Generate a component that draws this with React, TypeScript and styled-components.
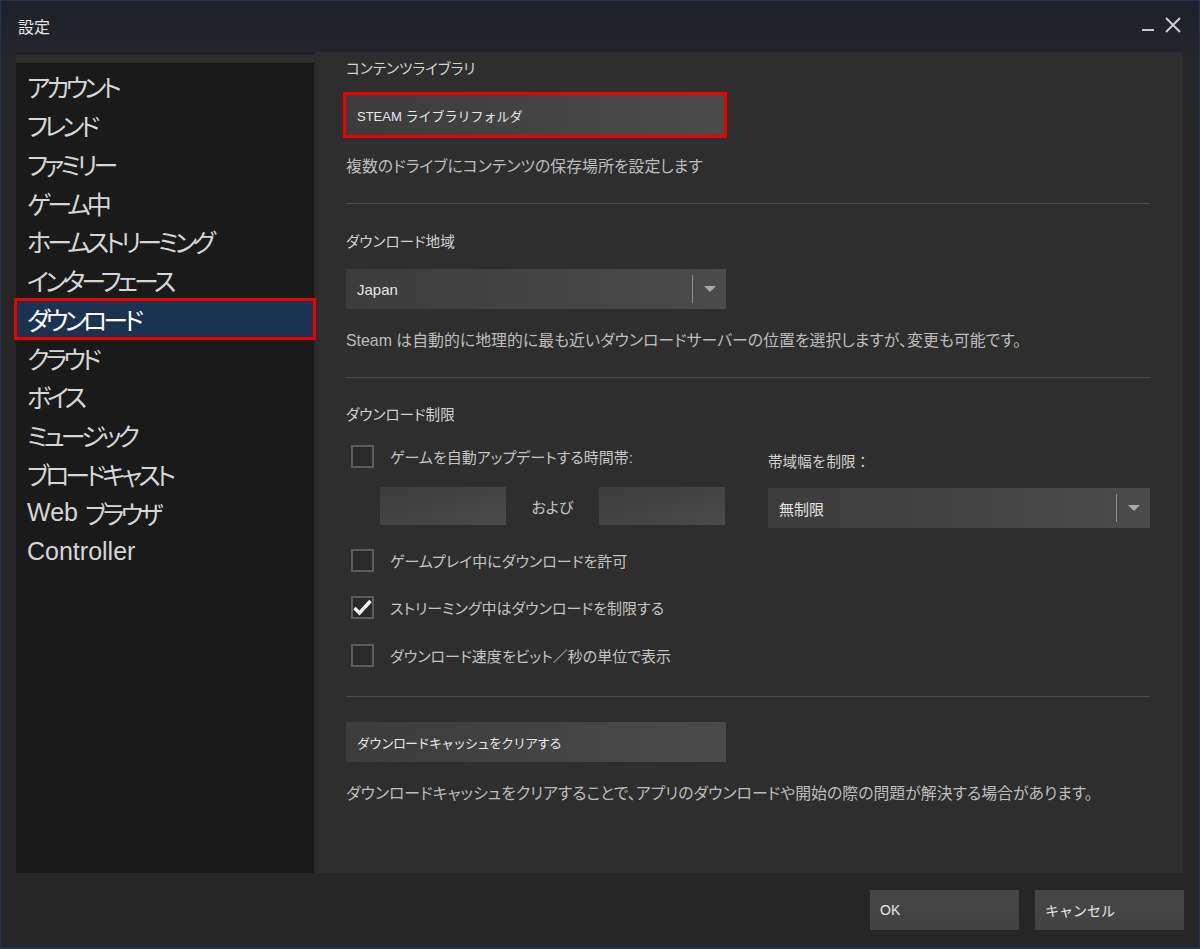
import React from "react";
import styled, { createGlobalStyle } from "styled-components";

const GlobalStyle = createGlobalStyle`
  html, body { margin: 0; padding: 0; background: #262626; }
  body {
    font-family: "Liberation Sans", "Noto Sans CJK JP", sans-serif;
    font-feature-settings: "palt";
    -webkit-font-smoothing: antialiased;
  }
  * { box-sizing: border-box; }
`;

const Window = styled.div`
  width: 1200px;
  height: 949px;
  display: flex;
  flex-direction: column;
  border: 1px solid #22344c;
  border-bottom-width: 2px;
  background: linear-gradient(to bottom, #1d2029 0px, #24262b 60px, #262626 140px);
  overflow: hidden;
`;

const TitleBar = styled.div`
  height: 51px;
  display: flex;
  align-items: flex-start;
  justify-content: space-between;
  padding: 17px 17px 0 17px;
`;

const Title = styled.div`
  font-size: 16px;
  line-height: 20px;
  color: #e4e4e4;
`;

const Controls = styled.div`
  display: flex;
  align-items: flex-start;
  gap: 8px;
  margin-top: -2px;
`;

const Body = styled.div`
  flex: 1;
  display: flex;
  gap: 1px;
  padding: 0 16px 0 15px;
  min-height: 0;
`;

const Sidebar = styled.div`
  width: 299px;
  display: flex;
  flex-direction: column;
  background: #1a1a1a;
`;

const SidebarTop = styled.div`
  height: 11px;
  border-top: 3px solid #1f1f1f;
  background: #2f2f2f;
`;

const NavList = styled.ul`
  list-style: none;
  margin: 0;
  padding: 4px 0 0 0;
`;

const NavItem = styled.li<{ $active?: boolean }>`
  height: 38.75px;
  display: flex;
  align-items: center;
  padding-left: 11px;
  font-size: 25px;
  white-space: pre;
  color: ${(p) => (p.$active ? "#ffffff" : "#d6d6d6")};
  background: ${(p) => (p.$active ? "#1b3350" : "transparent")};
  outline: ${(p) => (p.$active ? "3px solid #ee0000" : "none")};
  outline-offset: -1px;
  position: relative;
`;

/* narrow kana run inside a sidebar label */
const Kana = styled.span`
  letter-spacing: -3.9px;
`;

const Content = styled.div`
  flex: 1;
  background: #2e2e2e;
  padding: 0 33px 0 31px;
  display: flex;
  flex-direction: column;
`;

const Heading = styled.div<{ $top: number; $fullWidth?: boolean }>`
  margin-top: ${(p) => p.$top}px;
  font-size: 14.6px;
  line-height: 20px;
  color: #d2d2d2;
  font-feature-settings: ${(p) => (p.$fullWidth ? "normal" : "\"palt\"")};
`;

const Description = styled.div<{ $top: number }>`
  margin-top: ${(p) => p.$top}px;
  font-size: 15.9px;
  line-height: 20px;
  color: #bdbdbd;
`;

const Divider = styled.hr<{ $top: number }>`
  margin: ${(p) => p.$top}px 0 0 0;
  border: none;
  height: 1px;
  background: #4a4a4a;
`;

const Button = styled.button<{ $top: number; $marked?: boolean; $width?: number; $tight?: boolean }>`
  margin-top: ${(p) => p.$top}px;
  width: ${(p) => p.$width ?? 380}px;
  height: 40px;
  border: none;
  padding: 0 0 0 11px;
  text-align: left;
  font-family: inherit;
  font-size: 13px;
  letter-spacing: ${(p) => (p.$tight ? "-1px" : "0")};
  color: #e8e8e8;
  background: linear-gradient(to right, #3c3c3c, #4b4b4b);
  outline: ${(p) => (p.$marked ? "3px solid #ee0000" : "none")};
  outline-offset: 0;
`;

const Dropdown = styled.div<{ $top: number; $width: number }>`
  margin-top: ${(p) => p.$top}px;
  width: ${(p) => p.$width}px;
  height: 40px;
  display: flex;
  align-items: center;
  background: linear-gradient(to right, #3c3c3c, #4b4b4b);
  padding-left: 11px;
`;

const DropdownValue = styled.span`
  flex: 1;
  font-size: 15px;
  color: #e4e4e4;
`;

const DropdownToggle = styled.div`
  width: 34px;
  height: 28px;
  border-left: 1px solid #8a8a8a;
  display: flex;
  align-items: center;
  justify-content: center;
`;

const Arrow = styled.div`
  width: 0;
  height: 0;
  border-left: 6px solid transparent;
  border-right: 6px solid transparent;
  border-top: 6px solid #a8a8a8;
`;

const LimitGrid = styled.div`
  margin-top: 19px;
  display: grid;
  grid-template-columns: 422px 1fr;
`;

const LeftCol = styled.div`
  display: flex;
  flex-direction: column;
`;

const RightCol = styled.div`
  display: flex;
  flex-direction: column;
  padding-top: 8px;
`;

const CheckRow = styled.label<{ $top: number }>`
  margin-top: ${(p) => p.$top}px;
  margin-left: 5px;
  display: flex;
  align-items: center;
  gap: 16px;
  font-size: 15px;
  color: #c4c4c4;
  height: 24px;
`;

const Box = styled.span`
  width: 23px;
  height: 23px;
  border: 2px solid #5c5c5c;
  background: #2a2a2a;
  display: flex;
  align-items: center;
  justify-content: center;
`;

const TimeRow = styled.div`
  margin-top: 19px;
  margin-left: 34px;
  display: flex;
  align-items: center;
`;

const TimeInput = styled.div`
  width: 126px;
  height: 38px;
  background: linear-gradient(to bottom right, #3c3c3c, #4b4b4b);
`;

const And = styled.span`
  width: 93px;
  text-align: center;
  font-size: 15px;
  color: #c4c4c4;
`;

const Footer = styled.div`
  height: 74px;
  display: flex;
  justify-content: flex-end;
  align-items: flex-start;
  gap: 16px;
  padding: 17px 15px 0 0;
`;

const FooterButton = styled.button`
  width: 149px;
  height: 40px;
  border: none;
  padding: 0 0 0 10px;
  text-align: left;
  font-family: inherit;
  font-size: 14px;
  color: #e6e6e6;
  background: linear-gradient(to bottom, #474747, #424242);
`;

const Check = () => (
  <svg width="19" height="17" viewBox="0 0 19 17">
    <path d="M1.5 9 L6.5 14 L17.5 2" fill="none" stroke="#f4f4f4" strokeWidth="3.4" strokeLinejoin="miter" />
  </svg>
);

const navItems = [
  "アカウント",
  "フレンド",
  "ファミリー",
  "ゲーム中",
  "ホームストリーミング",
  "インターフェース",
  "ダウンロード",
  "クラウド",
  "ボイス",
  "ミュージック",
  "ブロードキャスト",
  "Web ブラウザ",
  "Controller",
];

// Latin runs keep normal spacing, Japanese runs get the tighter kana spacing.
const renderLabel = (label: string) =>
  label
    .split(/([\u3000-\u30ff\u4e00-\u9fff]+)/)
    .filter(Boolean)
    .map((part, i) =>
      /[\u3000-\u30ff\u4e00-\u9fff]/.test(part) ? <Kana key={i}>{part}</Kana> : <span key={i}>{part}</span>
    );

export default function App() {
  return (
    <>
      <GlobalStyle />
      <Window>
        <TitleBar>
          <Title>設定</Title>
          <Controls>
            <svg width="16" height="20" viewBox="0 0 16 20">
              <rect x="2" y="13" width="12" height="2" fill="#c8c8c8" />
            </svg>
            <svg width="18" height="18" viewBox="0 0 18 18">
              <path d="M2 2 L16 16 M16 2 L2 16" stroke="#cfcfcf" strokeWidth="2" />
            </svg>
          </Controls>
        </TitleBar>
        <Body>
          <Sidebar>
            <SidebarTop />
            <NavList>
              {navItems.map((n) => (
                <NavItem key={n} $active={n === "ダウンロード"}>
                  {renderLabel(n)}
                </NavItem>
              ))}
            </NavList>
          </Sidebar>
          <Content>
            <Heading $top={7}>コンテンツライブラリ</Heading>
            <Button $top={16} $marked $width={378}>
              STEAM ライブラリフォルダ
            </Button>
            <Description $top={22}>複数のドライブにコンテンツの保存場所を設定します</Description>
            <Divider $top={26} />
            <Heading $top={28}>ダウンロード地域</Heading>
            <Dropdown $top={17} $width={380}>
              <DropdownValue>Japan</DropdownValue>
              <DropdownToggle>
                <Arrow />
              </DropdownToggle>
            </Dropdown>
            <Description $top={22}>
              Steam は自動的に地理的に最も近いダウンロードサーバーの位置を選択しますが、変更も可能です。
            </Description>
            <Divider $top={26} />
            <Heading $top={27}>ダウンロード制限</Heading>
            <LimitGrid>
              <LeftCol>
                <CheckRow $top={0}>
                  <Box />
                  ゲームを自動アップデートする時間帯:
                </CheckRow>
                <TimeRow>
                  <TimeInput />
                  <And>および</And>
                  <TimeInput />
                </TimeRow>
                <CheckRow $top={23}>
                  <Box />
                  ゲームプレイ中にダウンロードを許可
                </CheckRow>
                <CheckRow $top={23}>
                  <Box>
                    <Check />
                  </Box>
                  ストリーミング中はダウンロードを制限する
                </CheckRow>
                <CheckRow $top={24}>
                  <Box />
                  ダウンロード速度をビット／秒の単位で表示
                </CheckRow>
              </LeftCol>
              <RightCol>
                <Heading $top={0} $fullWidth>
                  帯域幅を制限：
                </Heading>
                <Dropdown $top={16} $width={382}>
                  <DropdownValue>無制限</DropdownValue>
                  <DropdownToggle>
                    <Arrow />
                  </DropdownToggle>
                </Dropdown>
              </RightCol>
            </LimitGrid>
            <Divider $top={29} />
            <Button $top={25} $tight>
              ダウンロードキャッシュをクリアする
            </Button>
            <Description $top={22}>
              ダウンロードキャッシュをクリアすることで、アプリのダウンロードや開始の際の問題が解決する場合があります。
            </Description>
          </Content>
        </Body>
        <Footer>
          <FooterButton>OK</FooterButton>
          <FooterButton>キャンセル</FooterButton>
        </Footer>
      </Window>
    </>
  );
}
